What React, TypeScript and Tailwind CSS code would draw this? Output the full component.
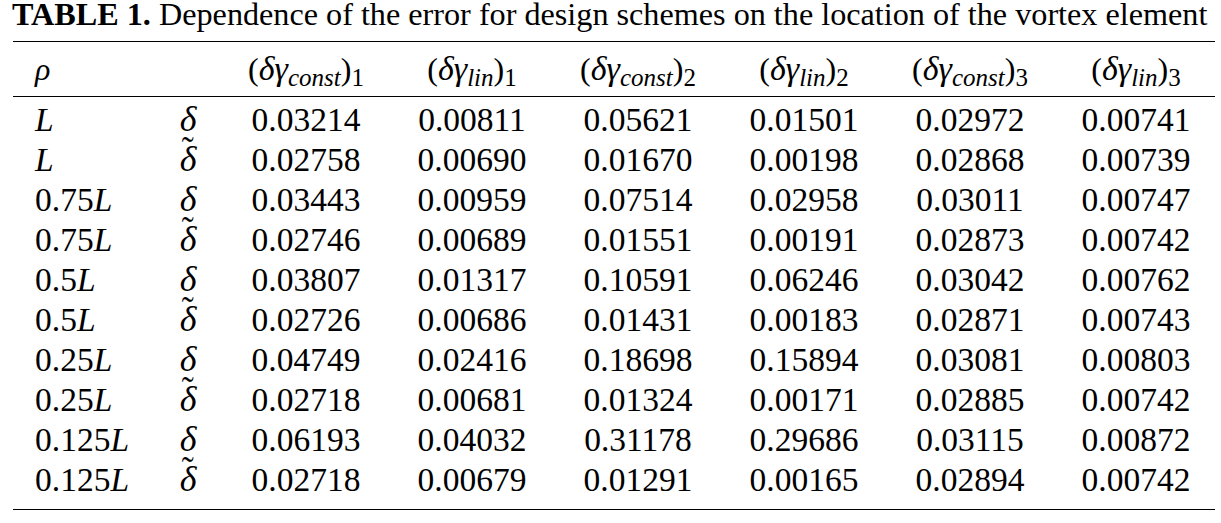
import React from 'react';

type Row = { rho: string; tilde: boolean; values: string[] };

const rows: Row[] = [
  { rho: '', tilde: false, values: ['0.03214', '0.00811', '0.05621', '0.01501', '0.02972', '0.00741'] },
  { rho: '', tilde: true, values: ['0.02758', '0.00690', '0.01670', '0.00198', '0.02868', '0.00739'] },
  { rho: '0.75', tilde: false, values: ['0.03443', '0.00959', '0.07514', '0.02958', '0.03011', '0.00747'] },
  { rho: '0.75', tilde: true, values: ['0.02746', '0.00689', '0.01551', '0.00191', '0.02873', '0.00742'] },
  { rho: '0.5', tilde: false, values: ['0.03807', '0.01317', '0.10591', '0.06246', '0.03042', '0.00762'] },
  { rho: '0.5', tilde: true, values: ['0.02726', '0.00686', '0.01431', '0.00183', '0.02871', '0.00743'] },
  { rho: '0.25', tilde: false, values: ['0.04749', '0.02416', '0.18698', '0.15894', '0.03081', '0.00803'] },
  { rho: '0.25', tilde: true, values: ['0.02718', '0.00681', '0.01324', '0.00171', '0.02885', '0.00742'] },
  { rho: '0.125', tilde: false, values: ['0.06193', '0.04032', '0.31178', '0.29686', '0.03115', '0.00872'] },
  { rho: '0.125', tilde: true, values: ['0.02718', '0.00679', '0.01291', '0.00165', '0.02894', '0.00742'] },
];

const headers: [string, string][] = [
  ['const', '1'],
  ['lin', '1'],
  ['const', '2'],
  ['lin', '2'],
  ['const', '3'],
  ['lin', '3'],
];

const gridCols = 'grid grid-cols-[140px_70px_repeat(6,166px)]';

const Delta = ({ tilde }: { tilde: boolean }) => (
  <span className="relative inline-block italic text-[36px] leading-[40px]">
    δ
    {tilde && (
      <span className="absolute left-[2px] top-[-9px] not-italic leading-[40px]">˜</span>
    )}
  </span>
);

const Header = ({ sub, idx }: { sub: string; idx: string }) => (
  <span className="whitespace-nowrap">
    (<span className="italic text-[34px]">δγ</span>
    <span className="relative top-[6px] italic text-[25px]">{sub}</span>)
    <span className="relative top-[6px] text-[25px]">{idx}</span>
  </span>
);

export default function App() {
  return (
    <div className="w-[1221px] h-[523px] bg-white text-black font-['Liberation_Serif',serif]">
      <p className="pl-[12px] -mt-[3px] text-[32.2px] leading-[34px] whitespace-nowrap">
        <b>TABLE 1.</b> Dependence of the error for design schemes on the location of the vortex element
      </p>

      <div className="ml-[13px] mt-[10px] w-[1202px] border-t-[1.5px] border-black">
        <div className={`${gridCols} h-[54px] items-center text-[32px] leading-none`}>
          <div className="pl-[22px] italic">ρ</div>
          <div />
          {headers.map(([sub, idx], i) => (
            <div key={i} className="text-center">
              <Header sub={sub} idx={idx} />
            </div>
          ))}
        </div>

        <div className="border-t-[1.5px] border-black pt-[2px] pb-[10px] border-b-[1.5px]">
          {rows.map((r, i) => (
            <div key={i} className={`${gridCols} h-[40px] items-center text-[33.5px] leading-[40px]`}>
              <div className="pl-[22px]">
                {r.rho}
                <span className="italic">L</span>
              </div>
              <div className="text-center">
                <Delta tilde={r.tilde} />
              </div>
              {r.values.map((v, j) => (
                <div key={j} className="text-center">
                  {v}
                </div>
              ))}
            </div>
          ))}
        </div>
      </div>
    </div>
  );
}
